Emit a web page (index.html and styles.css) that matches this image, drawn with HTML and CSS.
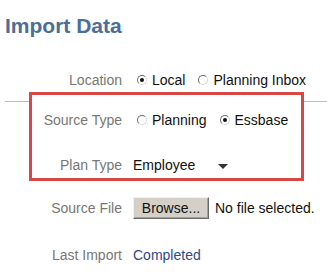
FILE: index.html
```html
<!DOCTYPE html>
<html>
<head>
    <meta charset="utf-8">
    <title>Import Data</title>
    <link rel="stylesheet" href="styles.css">
</head>
<body>
<h1 class="page-title">Import Data</h1>
<div class="import-form">
    <div class="row">
        <span class="label">Location</span>
        <span class="option"><span class="radio checked"></span>Local</span>
        <span class="option"><span class="radio"></span>Planning Inbox</span>
    </div>
    <div class="divider"></div>
    <div class="callout">
        <div class="row">
            <span class="label">Source Type</span>
            <span class="option"><span class="radio"></span>Planning</span>
            <span class="option"><span class="radio checked"></span>Essbase</span>
        </div>
        <div class="row plan-row">
            <span class="label">Plan Type</span>
            <span class="value">Employee</span>
            <span class="caret"></span>
        </div>
    </div>
    <div class="row file-row">
        <span class="label">Source File</span>
        <button class="browse-btn" type="button">Browse...</button>
        <span class="value file-name">No file selected.</span>
    </div>
    <div class="row last-row">
        <span class="label">Last Import</span>
        <span class="status">Completed</span>
    </div>
</div>
</body>
</html>
```

FILE: styles.css
```css
body {
    margin: 0;
    background: #fff;
    font-family: "Liberation Sans", Arial, sans-serif;
}

.page-title {
    margin: 13px 0 0 5px;
    font-size: 21px;
    line-height: 26px;
    font-weight: bold;
    color: #4a7098;
}

.import-form {
    margin-top: 29px;
    font-size: 14px;
    line-height: 16px;
}

.row {
    display: flex;
    align-items: center;
    height: 24px;
    padding-left: 32px;
}

.label {
    width: 90px;
    margin-right: 11px;
    text-align: right;
    color: #777;
    white-space: nowrap;
}

.option {
    display: flex;
    align-items: center;
    margin-right: 9px;
    color: #111;
}

.radio {
    display: inline-block;
    box-sizing: border-box;
    width: 10px;
    height: 10px;
    margin: 0 5px 0 4px;
    border: 1px solid;
    border-color: #6e6e6e #d8d8d8 #d8d8d8 #6e6e6e;
    border-radius: 50%;
    background: #fff;
    position: relative;
}

.radio.checked::after {
    content: "";
    position: absolute;
    left: 2px;
    top: 2px;
    width: 4px;
    height: 4px;
    border-radius: 50%;
    background: #111;
}

.divider {
    margin: 9px 0 0 5px;
    height: 1px;
    background: #bcbcbc;
}

.callout {
    position: relative;
    box-sizing: border-box;
    width: 275px;
    margin: -10px 0 0 29px;
    padding: 13px 0 1px;
    border: 3px solid #d74744;
    background: #fff;
}

.callout .row {
    padding-left: 0;
}

.plan-row {
    margin-top: 21px;
}

.value {
    color: #111;
}

.caret {
    margin-left: 23px;
    margin-top: 3px;
    width: 0;
    height: 0;
    border-left: 5px solid transparent;
    border-right: 5px solid transparent;
    border-top: 5px solid #333;
}

.file-row {
    margin-top: 15px;
}

.browse-btn {
    box-sizing: border-box;
    width: 76px;
    height: 22px;
    padding: 0;
    font-family: inherit;
    font-size: 14px;
    color: #111;
    background: #d4d0c8;
    border: 1px solid;
    border-color: #f2f2f2 #6a6a6a #6a6a6a #f2f2f2;
    box-shadow: inset -1px -1px #a5a29b;
}

.file-name {
    margin-left: 6px;
}

.last-row {
    margin-top: 23px;
}

.status {
    color: #2e4a8c;
}
```
